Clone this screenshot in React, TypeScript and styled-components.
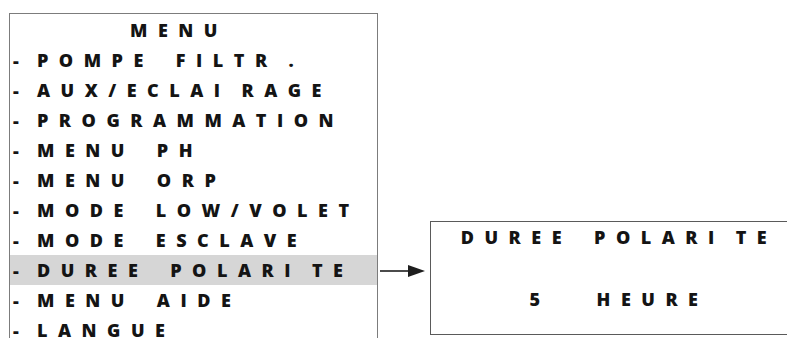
import styled, { createGlobalStyle } from 'styled-components';

const GlobalStyle = createGlobalStyle`
    html, body {
        margin: 0;
        padding: 0;
        background: #ffffff;
    }
    body {
        font-family: "Open Sans", "Liberation Sans", sans-serif;
    }
`;

const Page = styled.div`
    display: flex;
    align-items: flex-start;
    width: 787px;
    height: 338px;
    overflow: hidden;
    color: #141414;
`;

const MenuPanel = styled.div`
    box-sizing: border-box;
    width: 369px;
    height: 340px;
    margin: 13px 0 0 9px;
    padding-top: 1px;
    border: 1px solid #7c7c7c;
    border-bottom: none;
    flex-shrink: 0;
`;

// double spaces = word gap, single space = the small gaps of the LCD text
const ScreenText = styled.span`
    font-size: 18px;
    font-weight: 800;
    letter-spacing: 10.5px;
    word-spacing: -4.2px;
    white-space: pre;
`;

const MenuTitle = styled.div`
    height: 30px;
    line-height: 30px;
    padding-left: 120px;
`;

const MenuRow = styled.div<{ $active?: boolean }>`
    display: flex;
    align-items: center;
    height: 30px;
    padding-left: 3px;
    background: ${p => (p.$active ? '#d6d6d6' : 'transparent')};
`;

const Dash = styled.span`
    width: 24px;
    font-size: 18px;
    font-weight: 800;
`;

const Connector = styled.svg`
    flex-shrink: 0;
    margin-top: 263px;
`;

const DetailPanel = styled.div`
    box-sizing: border-box;
    flex: 1;
    height: 114px;
    margin-top: 221px;
    padding-left: 20px;
    border: 1px solid #5a5a5a;
    border-right: none;
    display: flex;
    flex-direction: column;
    gap: 32px;
`;

const DetailLine = styled.div<{ $gap?: number }>`
    display: flex;
    justify-content: center;
    gap: ${p => p.$gap ?? 0}px;
    height: 30px;
    line-height: 30px;
`;

const items = [
    'POMPE  FILTR .',
    'AUX/ECLAI RAGE',
    'PROGRAMMATION',
    'MENU  PH',
    'MENU  ORP',
    'MODE  LOW/VOLET',
    'MODE  ESCLAVE',
    'DUREE  POLARI TE',
    'MENU  AIDE',
    'LANGUE',
];

const App = () => {
    return (
        <>
            <GlobalStyle />
            <Page>
                <MenuPanel>
                    <MenuTitle>
                        <ScreenText>MENU</ScreenText>
                    </MenuTitle>
                    {items.map(label => (
                        <MenuRow key={label} $active={label.startsWith('DUREE')}>
                            <Dash>-</Dash>
                            <ScreenText>{label}</ScreenText>
                        </MenuRow>
                    ))}
                </MenuPanel>
                <Connector width="52" height="16" viewBox="0 0 52 16">
                    <line x1="2" y1="8" x2="32" y2="8" stroke="#1e1e1e" strokeWidth="1.6" />
                    <polygon points="30,2 47,8 30,14" fill="#1e1e1e" />
                </Connector>
                <DetailPanel>
                    <DetailLine>
                        <ScreenText>DUREE  POLARI TE</ScreenText>
                    </DetailLine>
                    <DetailLine $gap={46}>
                        <ScreenText>5</ScreenText>
                        <ScreenText>HEURE</ScreenText>
                    </DetailLine>
                </DetailPanel>
            </Page>
        </>
    );
};

export default App;
